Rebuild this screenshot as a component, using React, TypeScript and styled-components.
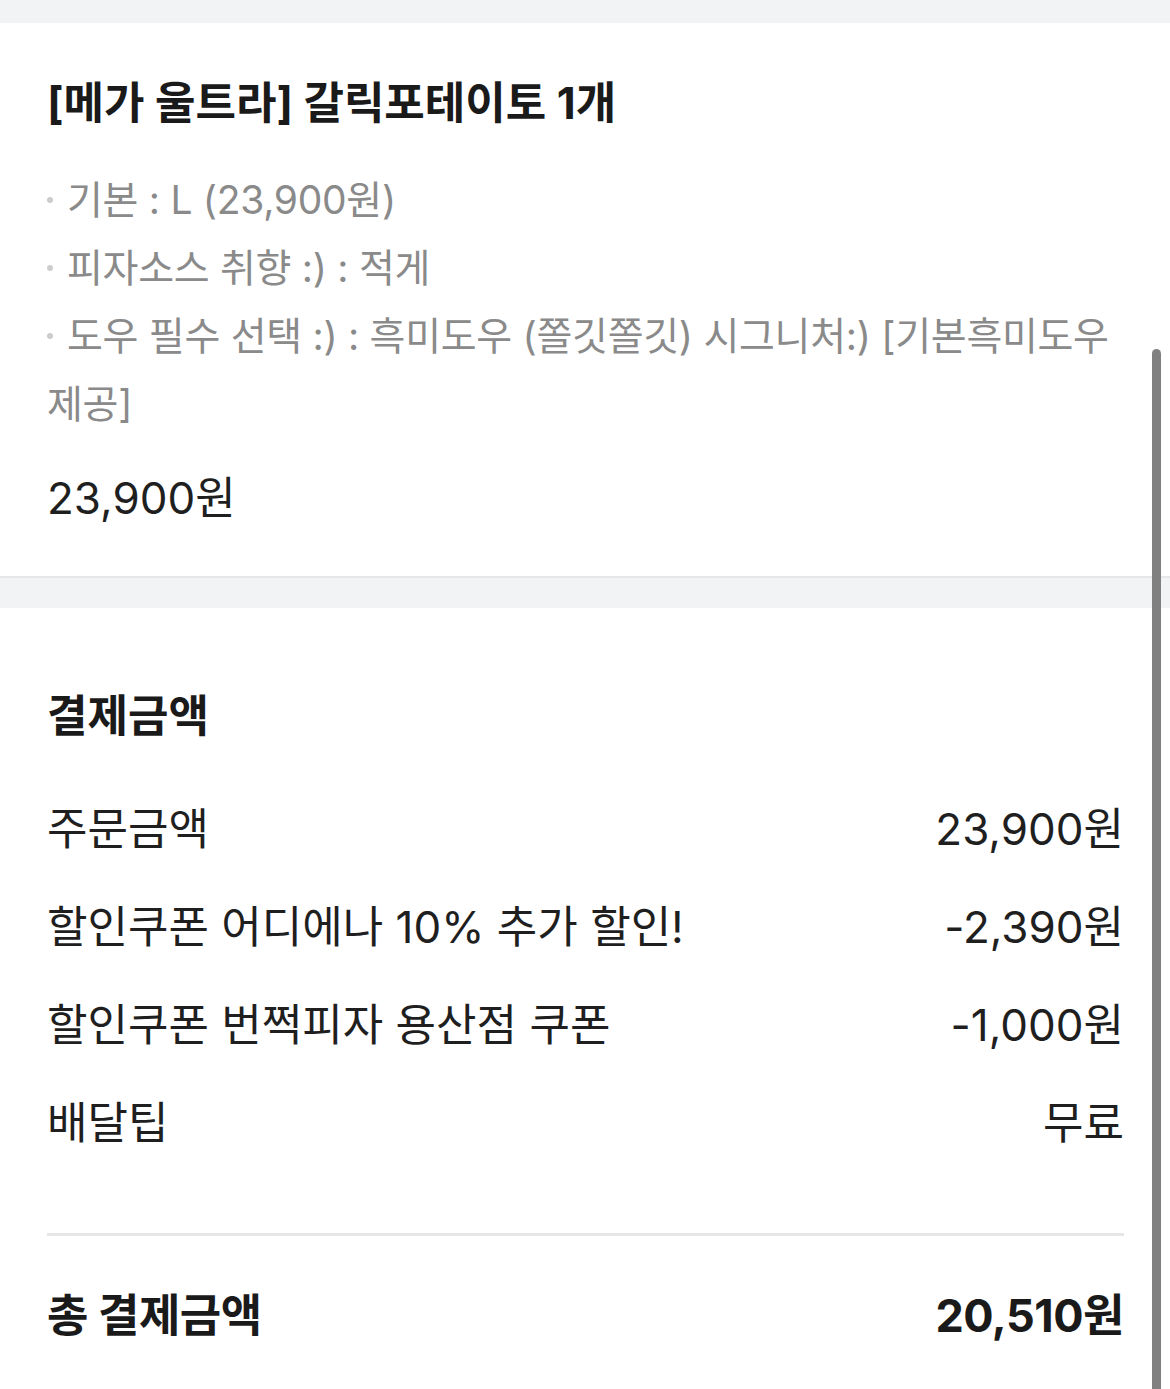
import React from "react";
import styled, { createGlobalStyle } from "styled-components";

const Global = createGlobalStyle`
  html, body { margin: 0; padding: 0; background: #ffffff; }
  body { font-family: Inter, "Noto Sans CJK KR", sans-serif; color: #1f1f1f; }
  * { box-sizing: border-box; }
`;

const Page = styled.div`
  position: relative;
  width: 1170px;
  height: 1389px;
  overflow: hidden;
  background: #ffffff;
  display: flex;
  flex-direction: column;
`;

const Gap = styled.div<{ $h: number; $border?: boolean }>`
  height: ${(p) => p.$h}px;
  background: #f2f3f5;
  border-top: ${(p) => (p.$border ? "2px solid #e6e7e9" : "none")};
  flex-shrink: 0;
`;

const Section = styled.section`
  background: #ffffff;
  padding: 0 46px 0 47px;
  display: flex;
  flex-direction: column;
`;

const Title = styled.h2`
  margin: 52px 0 0;
  font-size: 44px;
  line-height: 56px;
  font-weight: 700;
  color: #1a1a1a;
  letter-spacing: 0;
`;

const Options = styled.ul`
  list-style: none;
  margin: 35px 0 0;
  padding: 0;
`;

const Option = styled.li`
  font-size: 39px;
  line-height: 68px;
  color: #8a8a8a;
  letter-spacing: -0.3px;
  word-break: keep-all;
  &::before {
    content: "";
    display: inline-block;
    width: 6px;
    height: 6px;
    border-radius: 50%;
    background: #cdcdcd;
    vertical-align: middle;
    margin: 0 14px 6px 0;
  }
`;

const Price = styled.div`
  margin: 32px 0 50px;
  font-size: 44px;
  line-height: 56px;
  color: #1f1f1f;
`;

const PayTitle = styled.h2`
  margin: 80px 0 0;
  font-size: 44px;
  line-height: 56px;
  font-weight: 700;
  color: #1a1a1a;
`;

const Rows = styled.div`
  margin-top: 33px;
  display: flex;
  flex-direction: column;
`;

const Row = styled.div`
  display: flex;
  justify-content: space-between;
  align-items: center;
  height: 98px;
  font-size: 44px;
  color: #1f1f1f;
`;

const Divider = styled.hr`
  margin: 64px 0 0;
  border: none;
  height: 3px;
  background: #e6e6e6;
`;

const TotalRow = styled.div`
  display: flex;
  justify-content: space-between;
  align-items: center;
  height: 152px;
  font-size: 45px;
  font-weight: 700;
  color: #1a1a1a;
  letter-spacing: -0.5px;
`;

const Scrollbar = styled.div`
  position: absolute;
  left: 1152px;
  top: 349px;
  width: 9px;
  height: 1100px;
  border-radius: 5px;
  background: #808080;
`;

const options = [
  "기본 : L (23,900원)",
  "피자소스 취향 :) : 적게",
  "도우 필수 선택 :) : 흑미도우 (쫄깃쫄깃) 시그니처:) [기본흑미도우 제공]",
];

const rows: [string, string][] = [
  ["주문금액", "23,900원"],
  ["할인쿠폰 어디에나 10% 추가 할인!", "-2,390원"],
  ["할인쿠폰 번쩍피자 용산점 쿠폰", "-1,000원"],
  ["배달팁", "무료"],
];

export default function App() {
  return (
    <Page>
      <Global />
      <Gap $h={23} />
      <Section>
        <Title>[메가 울트라] 갈릭포테이토 1개</Title>
        <Options>
          {options.map((o) => (
            <Option key={o}>{o}</Option>
          ))}
        </Options>
        <Price>23,900원</Price>
      </Section>
      <Gap $h={32} $border />
      <Section>
        <PayTitle>결제금액</PayTitle>
        <Rows>
          {rows.map(([l, v]) => (
            <Row key={l}>
              <span>{l}</span>
              <span>{v}</span>
            </Row>
          ))}
        </Rows>
        <Divider />
        <TotalRow>
          <span>총 결제금액</span>
          <span>20,510원</span>
        </TotalRow>
      </Section>
      <Scrollbar />
    </Page>
  );
}
